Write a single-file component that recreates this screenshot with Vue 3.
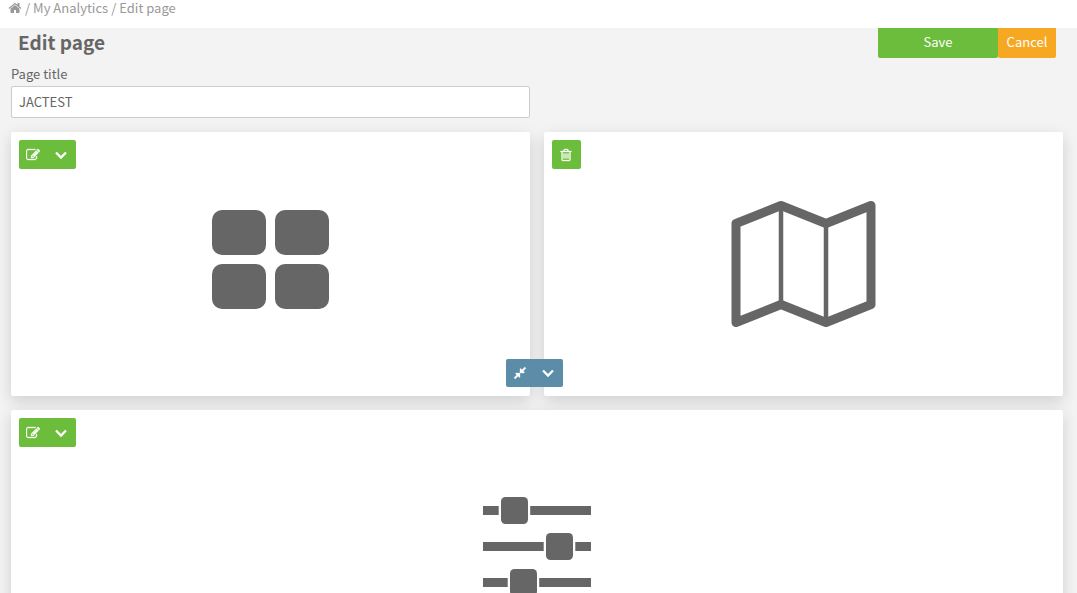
<script setup>
import { ref } from 'vue'

const title = ref('JACTEST')

const paths = {
  home: 'M1472 992v480q0 26-19 45t-45 19h-384v-384h-256v384h-384q-26 0-45-19t-19-45v-480q0-1 .5-3t.5-3l575-474 575 474q1 2 1 6zm223-69l-62 74q-8 9-21 11h-3q-13 0-21-7l-692-577-692 577q-12 8-24 7-13-2-21-11l-62-74q-8-10-7-23.5t11-21.5l719-599q32-26 76-26t76 26l244 204v-195q0-14 9-23t23-9h192q14 0 23 9t9 23v408l219 182q10 8 11 21.5t-7 23.5z',
  edit: 'M888 1184l116-116-152-152-116 116v56h96v96h56zm440-720q-16-16-33 1l-350 350q-17 17-1 33t33-1l350-350q17-17 1-33zm80 594v190q0 119-84.5 203.5t-203.5 84.5h-832q-119 0-203.5-84.5t-84.5-203.5v-832q0-119 84.5-203.5t203.5-84.5h832q63 0 117 25 15 7 18 23 3 17-9 29l-49 49q-14 14-32 8-23-6-45-6h-832q-66 0-113 47t-47 113v832q0 66 47 113t113 47h832q66 0 113-47t47-113v-126q0-13 9-22l64-64q15-15 35-7t20 29zm-96-738l288 288-672 672h-288v-288zm444 132l-92 92-288-288 92-92q28-28 68-28t68 28l152 152q28 28 28 68t-28 68z',
  trash: 'M704 736v576q0 14-9 23t-23 9h-64q-14 0-23-9t-9-23v-576q0-14 9-23t23-9h64q14 0 23 9t9 23zm256 0v576q0 14-9 23t-23 9h-64q-14 0-23-9t-9-23v-576q0-14 9-23t23-9h64q14 0 23 9t9 23zm256 0v576q0 14-9 23t-23 9h-64q-14 0-23-9t-9-23v-576q0-14 9-23t23-9h64q14 0 23 9t9 23zm128 724v-948h-896v948q0 22 7 40.5t14.5 27 10.5 8.5h832q3 0 10.5-8.5t14.5-27 7-40.5zm-672-1076h448l-48-117q-7-9-17-11h-317q-10 2-17 11zm928 32v64q0 14-9 23t-23 9h-96v948q0 83-47 143.5t-113 60.5h-832q-66 0-113-58.5t-47-141.5v-952h-96q-14 0-23-9t-9-23v-64q0-14 9-23t23-9h309l70-167q15-37 54-63t79-26h320q40 0 79 26t54 63l70 167h309q14 0 23 9t9 23z',
  compress: 'M896 960v448q0 26-19 45t-45 19-45-19l-144-144-332 332q-10 10-23 10t-23-10l-114-114q-10-10-10-23t10-23l332-332-144-144q-19-19-19-45t19-45 45-19h448q26 0 45 19t19 45zm755-672q0 13-10 23l-332 332 144 144q19 19 19 45t-19 45-45 19h-448q-26 0-45-19t-19-45v-448q0-26 19-45t45-19 45 19l144 144 332-332q10-10 23-10t23 10l114 114q10 10 10 23z'
}
</script>

<template>
  <div class="page">
    <nav class="crumbs" aria-label="Breadcrumb">
      <a href="#" aria-label="Home"><svg class="icon" viewBox="0 0 1792 1792"><path :d="paths.home" /></svg></a>
      <span>/</span>
      <a href="#">My Analytics</a>
      <span>/</span>
      <a href="#">Edit page</a>
    </nav>

    <main class="editor">
      <header class="head">
        <h1>Edit page</h1>
        <div class="actions">
          <button type="button" class="save">Save</button>
          <button type="button" class="cancel">Cancel</button>
        </div>
      </header>

      <div class="field">
        <label for="page-title">Page title</label>
        <input id="page-title" v-model="title" type="text" />
      </div>

      <div class="board">
        <section class="card">
          <div class="tools">
            <button type="button" aria-label="Edit widget"><svg class="icon bold" viewBox="0 0 1792 1792"><path :d="paths.edit" /></svg></button>
            <button type="button" aria-label="Widget options"><svg class="icon" viewBox="0 0 14 14"><path class="chevron" d="M2 4.5L7 9.5L12 4.5" /></svg></button>
          </div>
          <svg class="art" viewBox="0 0 144 144">
            <rect x="13.5" y="18" width="54" height="45" rx="10" />
            <rect x="76.5" y="18" width="54" height="45" rx="10" />
            <rect x="13.5" y="72" width="54" height="45" rx="10" />
            <rect x="76.5" y="72" width="54" height="45" rx="10" />
          </svg>
          <div class="tools resize">
            <button type="button" aria-label="Shrink widget"><svg class="icon bold" viewBox="0 0 1792 1792"><path :d="paths.compress" /></svg></button>
            <button type="button" aria-label="Size options"><svg class="icon" viewBox="0 0 14 14"><path class="chevron" d="M2 4.5L7 9.5L12 4.5" /></svg></button>
          </div>
        </section>

        <section class="card">
          <div class="tools">
            <button type="button" aria-label="Delete widget"><svg class="icon bold" viewBox="0 0 1792 1792"><path :d="paths.trash" /></svg></button>
          </div>
          <svg class="art" viewBox="0 0 144 144">
            <path class="outline" d="M4.5 31.5L49.5 13.5L94.5 31.5L139.5 13.5V112.5L94.5 130.5L49.5 112.5L4.5 130.5Z" />
            <path class="fold" d="M49.5 13.5V112.5M94.5 31.5V130.5" />
          </svg>
        </section>

        <section class="card wide">
          <div class="tools">
            <button type="button" aria-label="Edit widget"><svg class="icon bold" viewBox="0 0 1792 1792"><path :d="paths.edit" /></svg></button>
            <button type="button" aria-label="Widget options"><svg class="icon" viewBox="0 0 14 14"><path class="chevron" d="M2 4.5L7 9.5L12 4.5" /></svg></button>
          </div>
          <svg class="art" viewBox="0 0 144 144">
            <path d="M18 36h15.7v9H18zM65.2 36H126v9H65.2zM18 72h60.7v9H18zM110.3 72H126v9h-15.7zM18 108h24.7v9H18zM74.2 108H126v9H74.2z" />
            <rect x="36" y="27" width="27" height="27" rx="4.5" />
            <rect x="81" y="63" width="27" height="27" rx="4.5" />
            <rect x="45" y="99" width="27" height="27" rx="4.5" />
          </svg>
        </section>
      </div>
    </main>
  </div>
</template>

<style>
body {
  overflow: hidden;
}
</style>

<style scoped>
.page {
  height: 100vh;
  overflow: hidden;
  background: #f3f3f3;
  color: #666;
  font: 13px/20px "Noto Sans CJK SC", "Open Sans", sans-serif;
}
* {
  box-sizing: border-box;
}
.icon {
  display: block;
  width: 14px;
  height: 14px;
  fill: currentColor;
}
.bold {
  stroke: currentColor;
  stroke-width: 40;
}
.crumbs {
  display: flex;
  align-items: center;
  gap: 3px;
  height: 28px;
  padding: 0 8px 12px;
  background: #fff;
  color: #999;
  line-height: 16px;
}
.crumbs a {
  color: inherit;
  text-decoration: none;
}
.head {
  display: flex;
  justify-content: space-between;
  align-items: flex-start;
  padding: 0 21px 0 18px;
}
h1 {
  margin: 0;
  font-size: 19px;
  line-height: 28px;
  font-weight: 700;
}
.actions {
  display: flex;
}
button {
  border: 0;
  padding: 0;
  color: #fff;
  font: inherit;
  cursor: pointer;
}
.actions button {
  height: 30px;
  padding-bottom: 2px;
  border-radius: 0 0 2px 2px;
}
.save {
  width: 120px;
  background: #6dbd3d;
}
.cancel {
  width: 58px;
  background: #f7a823;
}
.field {
  padding: 6px 14px 14px 11px;
}
.field label {
  display: block;
  padding-bottom: 2px;
}
.field input {
  display: block;
  width: calc(50% - 7px);
  height: 32px;
  padding: 0 7px 2px;
  border: 1px solid #ccc;
  border-radius: 2px;
  background: #fff;
  color: #666;
  font: inherit;
}
.board {
  display: grid;
  grid-template-columns: 1fr 1fr;
  gap: 14px;
  padding: 0 14px 14px 11px;
}
.card {
  position: relative;
  display: flex;
  align-items: center;
  justify-content: center;
  min-height: 264px;
  border-radius: 2px;
  background: #fff;
  box-shadow: 0 5px 15px rgba(0, 0, 0, 0.15);
}
.wide {
  grid-column: 1 / -1;
}
.tools {
  position: absolute;
  top: 8px;
  left: 8px;
  display: flex;
  padding-right: 1px;
  border-radius: 2px;
  background: #6dbd3d;
}
.tools button {
  display: flex;
  align-items: center;
  justify-content: center;
  width: 28px;
  height: 29px;
  background: none;
}
.resize {
  top: auto;
  bottom: 9px;
  left: auto;
  right: -33px;
  z-index: 1;
  background: #5b8ca8;
}
.resize button {
  height: 28px;
}
.chevron {
  fill: none;
  stroke: currentColor;
  stroke-width: 2.3;
}
.art {
  width: 145px;
  height: 144px;
  fill: #666;
}
.wide .art {
  width: 144px;
}
.outline {
  fill: none;
  stroke: #666;
  stroke-width: 9;
  stroke-linejoin: round;
}
.fold {
  fill: none;
  stroke: #666;
  stroke-width: 4.5;
}
</style>
